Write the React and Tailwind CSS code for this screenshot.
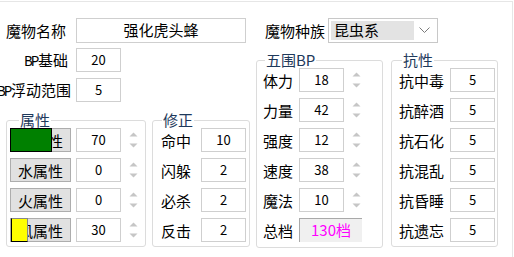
import React from "react";

const Spin = () => (
  <div className="w-[10px] h-[24px] flex flex-col items-center justify-center gap-[6px]">
    <svg width="9" height="5" viewBox="0 0 9 5"><path d="M0.5 4.5 L4.5 0.5 L8.5 4.5 Z" fill="#c6c6c6" /></svg>
    <svg width="9" height="5" viewBox="0 0 9 5"><path d="M0.5 0.5 L4.5 4.5 L8.5 0.5 Z" fill="#c6c6c6" /></svg>
  </div>
);

const Box = ({ v }) => (
  <div className="w-[45px] h-[24px] shrink-0 border border-[#cfcfcf] bg-white flex items-center justify-center text-[13px] text-black">
    {v}
  </div>
);

const Legend = ({ children, ml }) => (
  <legend className={`${ml} px-[1px] text-[15px] leading-[16px] text-[#1e395b]`}>{children}</legend>
);

const AttrRow = ({ label, v, overlay }) => (
  <div className="flex items-center h-[24px]">
    <div className="relative w-[61px] h-[24px] shrink-0">
      <div className="w-full h-full border border-[#adadad] bg-[#e1e1e1] flex items-center justify-center text-[15px] text-black leading-none">
        {label}
      </div>
      {overlay}
    </div>
    <div className="ml-[5px]"><Box v={v} /></div>
    <div className="ml-[7px]"><Spin /></div>
  </div>
);

const LRow = ({ label, v }) => (
  <div className="flex items-center h-[24px]">
    <div className="w-[30px] text-[15px] leading-none text-black whitespace-nowrap">{label}</div>
    <div className="ml-[10px]"><Box v={v} /></div>
  </div>
);

const BP = () => (
  <span className="font-['Liberation_Mono',monospace] text-[14px] tracking-[-1.5px]">BP</span>
);

export default function App() {
  return (
    <div className="w-[514px] h-[257px] bg-white pt-px font-['Noto_Sans_CJK_SC',sans-serif]">
      <div className="w-[513px] h-[256px] border-t border-r border-[#e6e6e6] pt-[16px]">
        {/* top row */}
        <div className="flex items-center h-[24px]">
          <div className="w-[68px] flex justify-end pr-[2px] text-[15px] leading-none whitespace-nowrap text-black">魔物名称</div>
          <div className="ml-[8px] w-[170px] h-[25px] border border-[#cfcfcf] flex items-center justify-center text-[15px] text-black">强化虎头蜂</div>
          <div className="ml-[19px] text-[15px] leading-none text-black whitespace-nowrap">魔物种族</div>
          <div className="ml-[3px] w-[110px] h-[25px] border border-[#c8c8c8] p-[2px] flex items-center">
            <div className="w-[83px] h-full bg-[#e3e3e3] flex items-center pl-[3px] text-[15px] text-black">昆虫系</div>
            <div className="flex-1 flex justify-center">
              <svg width="11" height="6" viewBox="0 0 11 6"><path d="M0.5 0.5 L5.5 5.5 L10.5 0.5" fill="none" stroke="#7a7a7a" strokeWidth="1" /></svg>
            </div>
          </div>
        </div>

        <div className="flex">
          {/* left column */}
          <div className="w-[250px] flex flex-col">
            <div className="mt-[6px] flex items-center h-[24px]">
              <div className="w-[68px] flex justify-end items-baseline text-[15px] leading-none whitespace-nowrap text-black">
                <BP />基础
              </div>
              <div className="ml-[8px]"><Box v="20" /></div>
            </div>
            <div className="mt-[6px] flex items-center h-[24px]">
              <div className="w-[71px] flex justify-end items-baseline text-[15px] leading-none whitespace-nowrap text-black">
                <BP />浮动范围
              </div>
              <div className="ml-[5px]"><Box v="5" /></div>
            </div>

            <div className="mt-[10px] flex">
              <fieldset className="ml-[6px] w-[140px] border border-[#dcdcdc] rounded-[3px] px-[3px] pb-[4px]">
                <Legend ml="ml-[9px]">属性</Legend>
                <div className="flex flex-col gap-[6px]">
                  <AttrRow
                    label="土属性"
                    v="70"
                    overlay={<div className="absolute left-0 top-0 w-[42px] h-[24px] bg-[#008000] border border-black" />}
                  />
                  <AttrRow label="水属性" v="0" />
                  <AttrRow label="火属性" v="0" />
                  <AttrRow
                    label="风属性"
                    v="30"
                    overlay={<div className="absolute left-[1px] top-0 w-[17px] h-[24px] bg-[#ffff00] border border-black border-t-[#888] border-r-[#888]" />}
                  />
                </div>
              </fieldset>

              <fieldset className="ml-[6px] w-[98px] border border-[#dcdcdc] rounded-[3px] pl-[8px] pr-[3px] pb-[4px]">
                <Legend ml="ml-[1px]">修正</Legend>
                <div className="flex flex-col gap-[6px]">
                  <LRow label="命中" v="10" />
                  <LRow label="闪躲" v="2" />
                  <LRow label="必杀" v="2" />
                  <LRow label="反击" v="2" />
                </div>
              </fieldset>
            </div>
          </div>

          {/* right side */}
          <div className="mt-[10px] flex">
            <fieldset className="ml-[6px] w-[127px] h-[196px] border border-[#dcdcdc] rounded-[3px] pl-[6px]">
              <Legend ml="ml-[2px]">五围BP</Legend>
              <div className="flex flex-col gap-[6px]">
                {[["体力", "18"], ["力量", "42"], ["强度", "12"], ["速度", "38"], ["魔法", "10"]].map(([l, v]) => (
                  <div key={l} className="flex items-center h-[24px]">
                    <div className="w-[30px] text-[15px] leading-none text-black whitespace-nowrap">{l}</div>
                    <div className="ml-[6px]"><Box v={v} /></div>
                    <div className="ml-[7px]"><Spin /></div>
                  </div>
                ))}
                <div className="flex items-center h-[24px]">
                  <div className="w-[30px] text-[15px] leading-none text-black whitespace-nowrap">总档</div>
                  <div className="ml-[6px] w-[63px] h-[24px] bg-[#f0f0f0] border-t border-l border-[#a9a9a9] flex items-center justify-center text-[15px] text-[#ff00ff]">
                    130档
                  </div>
                </div>
              </div>
            </fieldset>

            <fieldset className="ml-[8px] w-[107px] h-[195px] border border-[#dcdcdc] rounded-[3px] pl-[7px] pr-[2px]">
              <Legend ml="ml-[3px]">抗性</Legend>
              <div className="flex flex-col gap-[6px]">
                {["抗中毒", "抗醉酒", "抗石化", "抗混乱", "抗昏睡", "抗遗忘"].map((l) => (
                  <div key={l} className="flex items-center h-[24px]">
                    <div className="w-[45px] text-[15px] leading-none text-black whitespace-nowrap">{l}</div>
                    <div className="ml-[6px]"><Box v="5" /></div>
                  </div>
                ))}
              </div>
            </fieldset>
          </div>
        </div>
      </div>
    </div>
  );
}
